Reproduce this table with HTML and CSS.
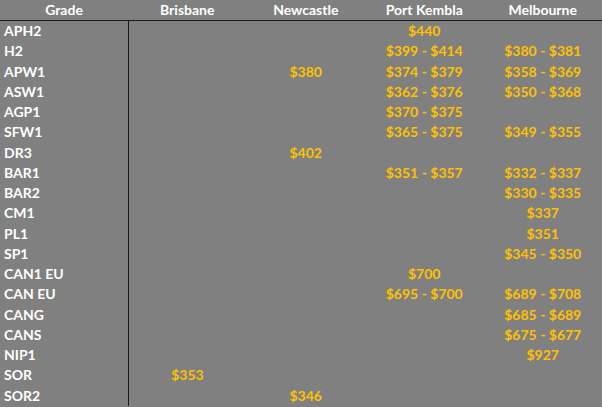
FILE: index.html
```html
<!DOCTYPE html>
<html>
<head>
<meta charset="utf-8">
<link rel="stylesheet" href="styles.css">
</head>
<body>
<table class="grid">
  <colgroup>
    <col class="c-grade"><col class="c-port"><col class="c-port"><col class="c-port"><col class="c-port">
  </colgroup>
  <thead>
    <tr><th>Grade</th><th>Brisbane</th><th>Newcastle</th><th>Port Kembla</th><th>Melbourne</th></tr>
  </thead>
  <tbody>
    <tr><td>APH2</td><td></td><td></td><td>$440</td><td></td></tr>
    <tr><td>H2</td><td></td><td></td><td>$399 - $414</td><td>$380 - $381</td></tr>
    <tr><td>APW1</td><td></td><td>$380</td><td>$374 - $379</td><td>$358 - $369</td></tr>
    <tr><td>ASW1</td><td></td><td></td><td>$362 - $376</td><td>$350 - $368</td></tr>
    <tr><td>AGP1</td><td></td><td></td><td>$370 - $375</td><td></td></tr>
    <tr><td>SFW1</td><td></td><td></td><td>$365 - $375</td><td>$349 - $355</td></tr>
    <tr><td>DR3</td><td></td><td>$402</td><td></td><td></td></tr>
    <tr><td>BAR1</td><td></td><td></td><td>$351 - $357</td><td>$332 - $337</td></tr>
    <tr><td>BAR2</td><td></td><td></td><td></td><td>$330 - $335</td></tr>
    <tr><td>CM1</td><td></td><td></td><td></td><td>$337</td></tr>
    <tr><td>PL1</td><td></td><td></td><td></td><td>$351</td></tr>
    <tr><td>SP1</td><td></td><td></td><td></td><td>$345 - $350</td></tr>
    <tr><td>CAN1 EU</td><td></td><td></td><td>$700</td><td></td></tr>
    <tr><td>CAN EU</td><td></td><td></td><td>$695 - $700</td><td>$689 - $708</td></tr>
    <tr><td>CANG</td><td></td><td></td><td></td><td>$685 - $689</td></tr>
    <tr><td>CANS</td><td></td><td></td><td></td><td>$675 - $677</td></tr>
    <tr><td>NIP1</td><td></td><td></td><td></td><td>$927</td></tr>
    <tr><td>SOR</td><td>$353</td><td></td><td></td><td></td></tr>
    <tr><td>SOR2</td><td></td><td>$346</td><td></td><td></td></tr>
  </tbody>
</table>
</body>
</html>
```
FILE: styles.css
```css
html, body {
  margin: 0;
  padding: 0;
  background: #808080;
}
body {
  width: 602px;
  height: 407px;
  overflow: hidden;
  font-family: "Lato", "Liberation Sans", sans-serif;
  font-weight: 700;
  font-size: 14px;
}
.grid {
  border-collapse: collapse;
  table-layout: fixed;
  width: 602px;
}
.c-grade { width: 128px; }
.c-port { width: 118.5px; }
.grid th {
  height: 20px;
  padding: 0;
  color: #ffffff;
  text-align: center;
  font-weight: 700;
  border-bottom: 1px solid #1a1a1a;
  line-height: 20px;
}
.grid td {
  height: 20.25px;
  padding: 0;
  line-height: 20px;
  color: #ffc000;
  text-align: center;
  white-space: nowrap;
}
.grid td:first-child {
  color: #ffffff;
  text-align: left;
  padding-left: 4px;
  border-right: 1px solid #1a1a1a;
}
```
